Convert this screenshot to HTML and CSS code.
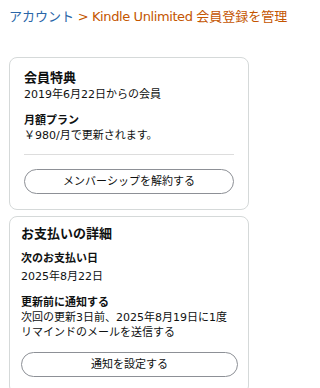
FILE: index.html
```html
<!DOCTYPE html>
<html lang="ja">
<head>
<meta charset="utf-8">
<link rel="stylesheet" href="styles.css">
</head>
<body>
<div class="page">
  <nav class="crumbs"><a class="crumb-link" href="#">アカウント</a><span class="crumb-current"><span class="latin"> &gt; Kindle Unlimited </span>会員登録を管理</span></nav>

  <section class="card card-benefits">
    <h2 class="card-title">会員特典</h2>
    <p class="text">2019年6月22日からの会員</p>
    <h3 class="sub-title plan-title">月額プラン</h3>
    <p class="text">￥980/月で更新されます。</p>
    <hr class="divider">
    <button class="pill-btn cancel-btn">メンバーシップを解約する</button>
  </section>

  <section class="card card-payment">
    <h2 class="card-title">お支払いの詳細</h2>
    <h3 class="sub-title next-title">次のお支払い日</h3>
    <p class="text next-date">2025年8月22日</p>
    <h3 class="sub-title notify-title">更新前に通知する</h3>
    <p class="text para">次回の更新3日前、2025年8月19日に1度<br>リマインドのメールを送信する</p>
    <button class="pill-btn notify-btn">通知を設定する</button>
  </section>
</div>
</body>
</html>
```

FILE: styles.css
```css
* { box-sizing: border-box; }
html, body { margin: 0; padding: 0; background: #fff; }
body {
  font-family: "DejaVu Sans", "Noto Sans CJK JP", sans-serif;
  color: #0f1111;
  overflow: hidden;
}
.page {
  padding: 8px 0 0 9px;
}
.crumbs {
  font-size: 13px;
  line-height: 18px;
  white-space: nowrap;
}
.crumb-link { color: #2a66a8; text-decoration: none; }
.crumb-current { color: #c45500; }
.latin { letter-spacing: -0.4px; }

.card {
  width: 240px;
  border: 1px solid #d5d9d9;
  border-radius: 8px;
  background: #fff;
  display: flex;
  flex-direction: column;
  align-items: stretch;
}
.card-benefits {
  margin-top: 31px;
  padding: 11px 14px 15px 14px;
}
.card-payment {
  margin-top: 6px;
  padding: 8px 10px 16px 11px;
}
.card-title {
  margin: 0;
  font-size: 13px;
  line-height: 18px;
  font-weight: bold;
}
.sub-title {
  margin: 0;
  font-size: 11px;
  line-height: 15px;
  font-weight: bold;
}
.text {
  margin: 0;
  font-size: 11px;
  line-height: 15px;
}
.plan-title { margin-top: 11px; }
.next-title { margin-top: 8px; }
.next-date { margin-top: 3px; }
.notify-title { margin-top: 11px; }
.para { line-height: 14.5px; margin-top: 1px; }

.divider {
  border: 0;
  border-top: 1px solid #dddddd;
  margin: 11px 0 0 0;
  height: 0;
}
.pill-btn {
  height: 25px;
  border: 1px solid #8d9096;
  border-radius: 13px;
  background: #fff;
  color: #0f1111;
  font-family: "DejaVu Sans", "Noto Sans CJK JP", sans-serif;
  font-size: 11px;
  line-height: 15px;
  padding: 0;
  text-align: center;
}
.cancel-btn { margin-top: 14px; }
.notify-btn { margin-top: 12px; }
```
